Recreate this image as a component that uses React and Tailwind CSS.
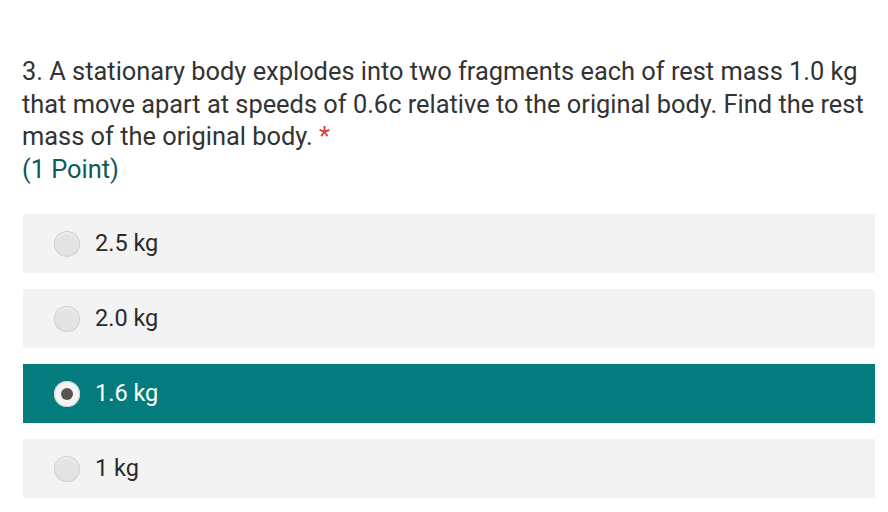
function Radio({ checked }) {
  if (checked) {
    return (
      <span className="flex h-[26px] w-[26px] items-center justify-center rounded-full bg-[#f4f4f4] shadow-[inset_0_0_0_1px_#d0d0d0]">
        <span className="h-[12px] w-[12px] rounded-full bg-[#555]" />
      </span>
    );
  }
  return (
    <span className="h-[26px] w-[26px] rounded-full bg-[#e3e3e3] shadow-[inset_0_0_0_1px_#cfcfcf,inset_0_2px_3px_rgba(255,255,255,0.7)]" />
  );
}

const options = [
  { label: "2.5 kg", checked: false },
  { label: "2.0 kg", checked: false },
  { label: "1.6 kg", checked: true },
  { label: "1 kg", checked: false },
];

export default function App() {
  return (
    <div className="h-[512px] w-[888px] overflow-hidden bg-white font-['Roboto',sans-serif]">
      <div className="px-[22px] pt-[55px] text-[25.4px] leading-[32.6px] text-[#333] whitespace-nowrap">
        <p>
          3. A stationary body explodes into two fragments each of rest mass 1.0 kg
          <br />
          that move apart at speeds of 0.6c relative to the original body. Find the rest
          <br />
          mass of the original body. <span className="text-[#d43b3b]">*</span>
        </p>
        <p className="text-[#0e5a56]">(1 Point)</p>
      </div>

      <div className="mt-[29px] flex flex-col gap-[16px] pl-[23px] pr-[13px]">
        {options.map((opt) => (
          <div
            key={opt.label}
            className={`flex h-[59px] items-center gap-[15px] pl-[31px] ${
              opt.checked ? "bg-[#047b7c] text-white" : "bg-[#f3f3f3] text-[#2b2b2b]"
            }`}
          >
            <Radio checked={opt.checked} />
            <span className="text-[23.5px]">{opt.label}</span>
          </div>
        ))}
      </div>
    </div>
  );
}
